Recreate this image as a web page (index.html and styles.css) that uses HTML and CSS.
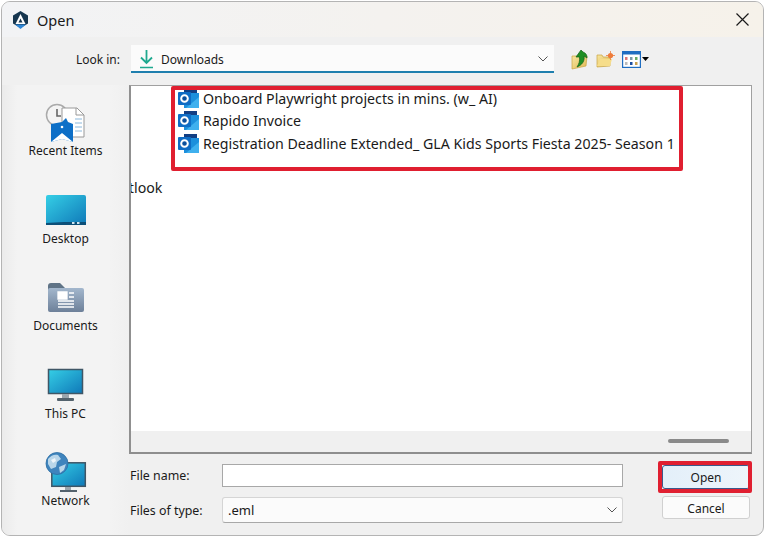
FILE: index.html
```html
<!DOCTYPE html>
<html lang="en">
<head>
<meta charset="utf-8">
<title>Open</title>
<link rel="stylesheet" href="styles.css">
</head>
<body>
<svg class="defs" width="0" height="0" aria-hidden="true">
  <defs>
    <linearGradient id="scr" x1="0" y1="0" x2="1" y2="1"><stop offset="0" stop-color="#35cfe6"/><stop offset="1" stop-color="#0f78b8"/></linearGradient>
    <linearGradient id="fold" x1="0" y1="0" x2="0" y2="1"><stop offset="0" stop-color="#a3b7cd"/><stop offset="1" stop-color="#6d8099"/></linearGradient>
    <linearGradient id="yel" x1="0" y1="0" x2="1" y2="1"><stop offset="0" stop-color="#f7e6a0"/><stop offset="1" stop-color="#e0b955"/></linearGradient>
    <symbol id="ol" viewBox="0 0 21 19">
      <rect x="6" y="0" width="13" height="5" fill="#123f84"/>
      <rect x="6" y="4" width="15" height="15" fill="#1c8fdc"/>
      <path d="M6 5h7v7H6z" fill="#0f6cbd"/>
      <path d="M21 8v11H8z" fill="#3fb0ee"/>
      <rect x="0" y="3" width="13" height="13" rx="1" fill="#0f6cc4"/>
      <circle cx="6.500" cy="9.500" r="3.300" fill="#0a4f9c" stroke="#fff" stroke-width="2"/>
    </symbol>
  </defs>
</svg>
<main class="window">
  <header class="titlebar">
    <svg class="logo" width="15" height="18" viewBox="0 0 15 18"><path d="M7.500 0 15 4.500v8L7.500 17 0 12.500v-8z" fill="#16364f"/><path d="M7.500 3 12.500 13h-10z" fill="#fff"/><path d="M7.500 7.500 9.500 11.500h-4z" fill="#16364f"/><path d="M2 13.500h11L7.500 18z" fill="#2e86d6"/></svg>
    <span class="title">Open</span>
    <svg class="close" width="13" height="13" viewBox="0 0 13 13"><path d="M.5.500l12 12M12.500.500l-12 12" stroke="#1a1a1a" stroke-width="1.200" fill="none"/></svg>
  </header>

  <section class="lookin">
    <span class="lookin-label">Look in:</span>
    <div class="combo">
      <svg width="15" height="20" viewBox="0 0 15 20"><path d="M7.500 1v13M2 8.500l5.500 5.500L13 8.500" fill="none" stroke="#1fa98f" stroke-width="1.800"/><path d="M1 18.500h13" stroke="#1fa98f" stroke-width="1.500"/></svg>
      <span class="combo-text">Downloads</span>
      <svg class="chev" width="10" height="6" viewBox="0 0 10 6"><path d="M.5.500 5 5 9.500.500" fill="none" stroke="#555"/></svg>
    </div>
    <div class="tools">
      <svg width="18" height="21" viewBox="0 0 18 21"><path d="M1 7h15l-1 10-14 3z" fill="url(#yel)" stroke="#c9a544" stroke-width=".7"/><path d="M6 18c2-3 3-6 2.500-10H5l5-7 2 2c3 1 4 3 4 6l-3-2c1 5-2 9-7 11z" fill="#1f8f24" stroke="#126318" stroke-width=".7"/></svg>
      <svg width="19" height="17" viewBox="0 0 19 17"><path d="M1 4h5l1 2h7v9l-13 1z" fill="url(#yel)" stroke="#c9a544" stroke-width=".7"/><path d="M4 8h12l-2 7H1z" fill="#f6dd8a"/><circle cx="14.500" cy="4.500" r="2.600" fill="#ee7b3a"/><path d="M14.500 0v9M10 4.500h9" stroke="#ee7b3a" stroke-width=".8"/></svg>
      <svg width="19" height="17" viewBox="0 0 19 17"><rect x=".6" y=".6" width="17.800" height="15.800" fill="#fff" stroke="#1f6dc1" stroke-width="1.200"/><rect x="0" y="0" width="19" height="3.500" fill="#1f6dc1"/><rect x="3" y="6" width="2.500" height="3" fill="#d77"/><rect x="8" y="6" width="2.500" height="3" fill="#79a"/><rect x="13" y="6" width="2.500" height="3" fill="#6a6"/><rect x="3" y="11" width="2.500" height="3" fill="#bbb"/><rect x="8" y="11" width="2.500" height="3" fill="#1f4fa0"/><rect x="13" y="11" width="2.500" height="3" fill="#c9a050"/></svg>
      <svg class="drop" width="7" height="4" viewBox="0 0 7 4"><path d="M0 0h7L3.500 4z" fill="#000"/></svg>
    </div>
  </section>

  <section class="body">
    <nav class="sidebar">
      <div class="place">
        <svg class="place-icon" width="48" height="40" viewBox="0 0 48 40"><circle cx="16" cy="13" r="10.500" fill="#f4f4f4" stroke="#aaa" stroke-width="1.500"/><path d="M16 7v7h4" fill="none" stroke="#666" stroke-width="1.600"/><path d="M21 6h15l7 7v22H21z" fill="#fff" stroke="#999"/><path d="M35 6v7h8" fill="none" stroke="#999"/><path d="M34 17h7M34 21h7M34 25h7M34 29h7" stroke="#8bb8dc"/><path d="M10 22l11-2 4-4 2 4 5 2v18l-11-3-11 3z" fill="#0d6fc7"/><path d="M10 40l11-9 11 9-11-3z" fill="#fff"/><circle cx="21" cy="25" r="1.300" fill="#fff"/></svg>
        <span class="place-label">Recent Items</span>
      </div>
      <div class="place">
        <svg class="place-icon" width="48" height="40" viewBox="0 0 48 40"><path d="M4 7a2 2 0 0 1 2-2h36a2 2 0 0 1 2 2v28H4z" fill="url(#scr)"/><path d="M4 33l18-1h22v3H4z" fill="#0c4f78"/><rect x="30" y="32" width="2.500" height="2" fill="#cfe6f2"/><rect x="35" y="32" width="2.500" height="2" fill="#cfe6f2"/></svg>
        <span class="place-label">Desktop</span>
      </div>
      <div class="place">
        <svg class="place-icon" width="48" height="40" viewBox="0 0 48 40"><path d="M6 9a3 3 0 0 1 3-3h9l5 5v4H6z" fill="#5f7386"/><path d="M6 13a2 2 0 0 1 2-2h32a2 2 0 0 1 2 2v20a2 2 0 0 1-2 2H8a2 2 0 0 1-2-2z" fill="url(#fold)"/><path d="M16 15h9v7h-9zM16 24h16M16 27h16M16 30h16M27 16h5M27 20h5" fill="#fff" stroke="#fff" stroke-width="1.300"/></svg>
        <span class="place-label">Documents</span>
      </div>
      <div class="place">
        <svg class="place-icon" width="48" height="40" viewBox="0 0 48 40"><rect x="6.500" y="4.500" width="34" height="24" fill="url(#scr)" stroke="#3f5666" stroke-width="1.500"/><rect x="20" y="29" width="7" height="4" fill="#9aa5ad"/><rect x="15" y="33" width="17" height="3" rx="1" fill="#53626d"/></svg>
        <span class="place-label">This PC</span>
      </div>
      <div class="place">
        <svg class="place-icon" width="48" height="40" viewBox="0 0 48 40"><rect x="9.800" y="10.800" width="33.500" height="23.500" fill="url(#scr)" stroke="#3f5666" stroke-width="1.500"/><rect x="23" y="35" width="6" height="3" fill="#9aa5ad"/><rect x="18" y="38" width="17" height="2" fill="#53626d"/><circle cx="15" cy="11.500" r="11" fill="#3f84bd"/><path d="M6 7c3-4 7-5 10-4l3 4-4 3-1 5-5 2-3-5zM17 15l7-3-2 6-4 3z" fill="#b9d6ea"/><path d="M9 8l4-2 1 3-3 2z" fill="#eef5fa"/><circle cx="15" cy="11.500" r="11" fill="none" stroke="#2c6da3" stroke-width=".8"/></svg>
        <span class="place-label">Network</span>
      </div>
    </nav>

    <div class="content">
      <div class="list">
        <ul class="files">
          <li class="file"><svg class="ol" width="21" height="19"><use href="#ol"/></svg><span>Onboard Playwright projects in mins. (w_ AI)</span></li>
          <li class="file"><svg class="ol" width="21" height="19"><use href="#ol"/></svg><span>Rapido Invoice</span></li>
          <li class="file"><svg class="ol" width="21" height="19"><use href="#ol"/></svg><span>Registration Deadline Extended_ GLA Kids Sports Fiesta 2025- Season 1</span></li>
        </ul>
        <div class="clipped">Outlook</div>
        <div class="scroll"><span class="thumb"></span></div>
        <div class="mark mark-files"></div>
      </div>
      <form class="form">
        <label class="form-label">File name:</label>
        <div class="field"></div>
        <div class="buttons">
          <div class="open-wrap"><div class="btn btn-open">Open</div><div class="mark mark-open"></div></div>
          <div class="btn">Cancel</div>
        </div>
        <label class="form-label">Files of type:</label>
        <div class="select"><span>.eml</span><svg width="10" height="6" viewBox="0 0 10 6"><path d="M.5.500 5 5 9.500.500" fill="none" stroke="#555"/></svg></div>
      </form>
    </div>
  </section>
</main>
</body>
</html>
```

FILE: styles.css
```css
* { box-sizing: border-box; }
html, body { margin: 0; padding: 0; background: #fff; }
body { width: 765px; height: 537px; overflow: hidden; font-family: "Noto Sans", "Open Sans", sans-serif; color: #1a1a1a; padding: 1px 0 0 1px; }
.defs { position: absolute; }

.window { width: 763px; height: 535px; border: 1px solid #b4b4b4; border-radius: 9px; background: #f0f0f0; overflow: hidden; display: flex; flex-direction: column; }

.titlebar { height: 35px; flex: none; display: flex; align-items: center; padding: 0 14px 0 11px; background: linear-gradient(90deg, #f2f3f5, #f4f2ef 50%, #f6f2ea); }
.logo { margin-right: 9px; }
.title { font-size: 14.500px; flex: 1; }

.lookin { flex: none; display: flex; align-items: center; height: 28px; margin: 8px 0 12px; }
.lookin-label { width: 118px; font-size: 12px; text-align: right; }
.combo { width: 423px; height: 28px; margin-left: 11px; display: flex; align-items: center; padding: 2px 6px 0 8px; background: #fbfbfb; border-bottom: 2px solid #1f7fae; }
.combo-text { flex: 1; font-size: 12px; margin-left: 7px; }
.tools { display: flex; align-items: center; gap: 7px; margin-left: 17px; }
.drop { margin-left: -6px; }

.body { flex: 1; display: flex; min-height: 0; }
.sidebar { width: 127px; flex: none; display: flex; flex-direction: column; align-items: center; gap: 30.500px; padding-top: 17px; background: linear-gradient(90deg, #ebebeb, #f3f3f3 12%, #f3f3f3 85%, #f0f0f0); }
.place { display: flex; flex-direction: column; align-items: center; }
.place-icon { display: block; }
.place-label { font-size: 12px; line-height: 16px; padding-top: 1px; box-sizing: content-box; }

.content { width: 623px; flex: none; display: flex; flex-direction: column; }
.list { position: relative; height: 369px; flex: none; background: #fff; border: 1px solid #a0a0a0; border-left-width: 2px; border-bottom-width: 2px; border-bottom-color: #8e8e8e; border-left-color: #909090; overflow: hidden; display: flex; flex-direction: column; }
.files { list-style: none; margin: 0; padding: 1px 0 0 47px; }
.file { display: flex; align-items: center; gap: 4px; height: 22.500px; font-size: 14.200px; white-space: nowrap; }
.ol { flex: none; }
.clipped { font-size: 14.200px; line-height: 20px; margin: 23px 0 0 -22px; }
.scroll { position: absolute; left: 0; right: 0; bottom: 0; height: 21px; background: #f0f0f0; }
.thumb { position: absolute; left: 537px; top: 8px; width: 61px; height: 4px; background: #8a8a8a; border-radius: 2px; }

.mark { position: absolute; border: 4px solid #e01f30; border-radius: 2px; pointer-events: none; }
.mark-files { left: 40px; top: 0; width: 512px; height: 85px; }
.mark-open { inset: -4px -2px -4px -4px; }

.form { display: grid; grid-template-columns: 93px 401px 89px; grid-template-rows: 23px 26px; row-gap: 10px; padding-top: 10px; }
.form-label { font-size: 12.400px; padding-left: 1px; align-self: center; }
.field { background: #fff; border: 1px solid #a8a8a8; }
.select { background: #fbfbfb; border: 1px solid #d5d5d5; border-bottom-color: #a8a8a8; border-radius: 3px; display: flex; align-items: center; justify-content: space-between; padding: 0 5px 0 5px; font-size: 13px; }
.buttons { grid-column: 3; grid-row: 1 / span 2; margin-left: 39px; width: 88px; display: flex; flex-direction: column; gap: 7px; padding-top: 1px; }
.open-wrap { position: relative; }
.btn { height: 23px; padding-top: 1px; display: flex; align-items: center; justify-content: center; font-size: 12px; background: #fbfbfb; border: 1px solid #d0d0d0; border-radius: 3px; }
.btn-open { height: 24px; padding-top: 0; background: linear-gradient(90deg, #e3eff9, #eef5fb); border-color: #3a5a8c; }
```
